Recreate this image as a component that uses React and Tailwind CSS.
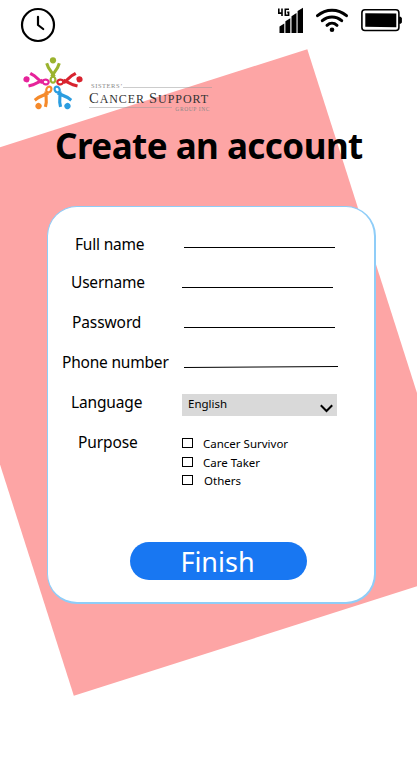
import React from "react";

const figures = [
  { x: 0, y: -5, angle: 0, color: "#9bb32e" },
  { x: 7, y: -3, angle: 82, color: "#d8232f" },
  { x: 4, y: 4.3, angle: 148, color: "#2b9de0" },
  { x: -4, y: 4.3, angle: 212, color: "#f58a2b" },
  { x: -7, y: -3, angle: -82, color: "#e6239a" },
];

function Figure({ x, y, angle, color }) {
  return (
    <g transform={`translate(${x} ${y}) rotate(${angle})`} stroke={color} fill="none">
      <circle cx="0" cy="-19.700" r="3.100" fill={color} stroke="none" />
      <path d="M-6.300-16.800-4.600-12.500 1.400-3.500M6.300-16.800 4.600-12.500-1.400-3.500" strokeWidth="3.100" />
      <ellipse cx="0" cy="-.3" rx="2.400" ry="3" strokeWidth="2.200" />
    </g>
  );
}

function Logo() {
  return (
    <div className="flex h-[60px] pl-[21px]">
      <svg className="h-[58px] w-[66px] shrink-0" viewBox="-32 -29 66 58">
        {figures.map((f) => (
          <Figure key={f.angle} {...f} />
        ))}
      </svg>
      <div className="ml-[2px] w-[123px] pt-[26px] font-['Liberation_Serif',serif]">
        <div className="flex h-[9px] items-start">
          <span className="pl-[2px] text-[6.500px] leading-[7px] tracking-[0.550px] text-[#888]">SISTERS’</span>
          <span className="mt-[5px] h-px flex-1 bg-[#999]/50" />
        </div>
        <div className="h-[14px] whitespace-nowrap text-[12px] leading-[14px] tracking-[0.950px] text-[#333]">
          <span className="text-[14.500px]">C</span>ANCER <span className="text-[14.500px]">S</span>UPPORT
        </div>
        <div className="flex h-[7px] items-start">
          <span className="mt-[2px] h-px flex-1 bg-[#999]/50" />
          <span className="pl-[3px] pr-[2px] pt-[1px] text-[5.500px] leading-[6px] tracking-[0.600px] text-[#888]">GROUP INC</span>
        </div>
      </div>
    </div>
  );
}

function StatusBar() {
  return (
    <header className="flex h-[50px] items-start justify-between pl-[20px] pr-[14px] pt-[6px]">
      <svg className="h-[38px] w-[36px]" viewBox="20 6 36 38" fill="none" stroke="#000" strokeWidth="2.200" strokeLinecap="round" strokeLinejoin="round">
        <circle cx="38" cy="25" r="16" />
        <path d="M38 16.800V25l5.200 4" />
      </svg>
      <div className="flex">
        <svg className="h-[30px] w-[28px]" viewBox="277 6 28 30">
          <path d="M279.500 26.500l4.800-3V33h-4.800zM285.400 21.300l4.900-3V33h-4.900zM291.500 16.200l5-3.200V33h-5zM297.600 11l5.400-3.300V33h-5.400z" />
          <path d="M278.800 8.500v4.600h4M282 8.500v7.500M289 9.200h-3.700v6h3.300v-2.800h-1.400" fill="none" stroke="#000" strokeWidth="1.600" />
        </svg>
        <svg className="ml-[9px] h-[30px] w-[36px]" viewBox="314 6 36 30" fill="none" stroke="#000" strokeWidth="3" strokeLinecap="round">
          <path d="M317.500 15.700c8.500-7.300 20.500-7.300 29 0M322.300 20.700c5.700-5.100 13.700-5.100 19.400 0M327 25.300c3-2.700 7-2.700 10 0" />
          <circle cx="332" cy="29.800" r="2.300" fill="#000" stroke="none" />
        </svg>
        <svg className="ml-[10px] h-[30px] w-[43px]" viewBox="360 6 43 30">
          <rect x="361.900" y="9.800" width="37" height="20.700" rx="3" fill="none" stroke="#000" strokeWidth="1.600" />
          <path d="M365.300 13.200l31 .3v13.700l-31-.4zM399 16.800h1.700l1.200 1.200v4.500l-1.200 1.200H399z" />
        </svg>
      </div>
    </header>
  );
}

function Label({ children, className }) {
  return (
    <label className={`-mt-px block w-[134px] shrink-0 whitespace-nowrap text-[15.500px] leading-5 ${className}`}>{children}</label>
  );
}

function Option({ children, className, textClass }) {
  return (
    <div className={`flex items-start ${className}`}>
      <span className="mt-[4px] h-[10px] w-[11px] border border-black" />
      <span className={`whitespace-nowrap text-[11.500px] leading-[19px] ${textClass}`}>{children}</span>
    </div>
  );
}

export default function App() {
  return (
    <div className="relative h-[759px] w-[417px] overflow-hidden bg-white font-['Noto_Sans',sans-serif] text-black">
      <div className="absolute left-[-19.200px] top-[99.900px] h-[544.600px] w-[419.200px] rotate-[-17.700deg] bg-[#fda5a5]" />
      <div className="relative flex flex-col">
        <StatusBar />
        <div className="pt-[6px]">
          <Logo />
        </div>
        <h1 className="ml-[55px] mt-[6px] h-[84px] whitespace-nowrap text-[35px] font-bold leading-[47px] tracking-[-0.540px]">
          Create an account
        </h1>
        <main className="ml-[47px] h-[398px] w-[329px] rounded-[30px] border border-b-2 border-r-2 border-[#8fcdf8] bg-white pt-[28px]">
          <div className="flex h-[38px]">
            <Label className="pl-[27px] tracking-[-0.200px]">Full name</Label>
            <span className="ml-[2px] mt-[12px] h-px w-[151px] bg-black" />
          </div>
          <div className="flex h-[40px]">
            <Label className="pl-[23px] tracking-[-0.200px]">Username</Label>
            <span className="mt-[14px] h-px w-[151px] bg-black" />
          </div>
          <div className="flex h-[40px]">
            <Label className="pl-[24px] tracking-[-0.100px]">Password</Label>
            <span className="ml-[2px] mt-[14px] h-px w-[151px] bg-black" />
          </div>
          <div className="flex h-[40px]">
            <Label className="pl-[14px] tracking-[-0.200px]">Phone number</Label>
            <svg className="ml-[2px] mt-[12px] h-[4px] w-[154px]" viewBox="0 0 154 4">
              <path d="M0 2.500L154 1.500" stroke="#000" />
            </svg>
          </div>
          <div className="flex h-[40px]">
            <Label className="pl-[23px] tracking-[-0.150px]">Language</Label>
            <div className="mt-[1px] flex h-[22px] w-[155px] justify-between bg-[#d9d9d9] pl-[6px] pr-[4px]">
              <span className="text-[11.500px] leading-5">English</span>
              <svg className="mt-[10px] h-[9px] w-[13px]" viewBox="0 0 13 9" fill="none" stroke="#000" strokeWidth="2">
                <path d="M.8 1.300l5.700 5.700 5.700-5.700" />
              </svg>
            </div>
          </div>
          <div className="flex h-[109px]">
            <Label className="pl-[30px] tracking-[-0.100px]">Purpose</Label>
            <div className="pt-[1px]">
              <Option className="h-[19px]" textClass="pl-[10px]">Cancer Survivor</Option>
              <Option className="h-[18px]" textClass="pl-[10px]">Care Taker</Option>
              <Option className="h-[18px]" textClass="pl-[11px]">Others</Option>
            </div>
          </div>
          <button className="ml-[82px] block h-[38px] w-[177px] rounded-[19px] bg-[#1877f2] pr-[2px] text-center text-[27px] leading-[40px] text-white">
            Finish
          </button>
        </main>
      </div>
    </div>
  );
}
